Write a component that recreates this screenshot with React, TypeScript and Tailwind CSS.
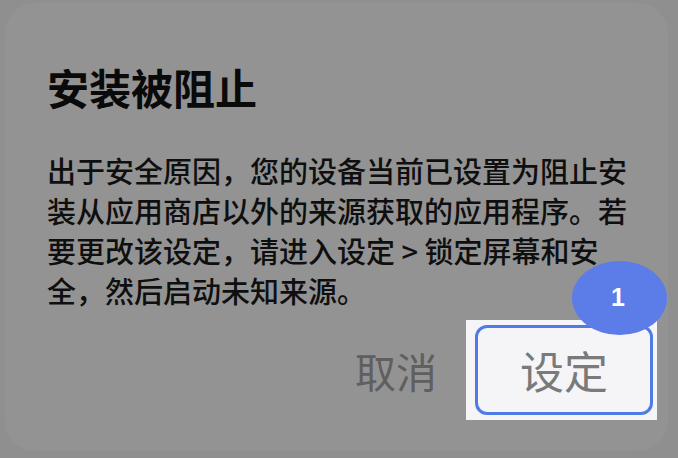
export default function App() {
  return (
    <div
      className="w-[678px] h-[458px] overflow-hidden bg-[#8f8f8f] pt-[3px] pl-[5px]"
      style={{ fontFamily: '"Noto Sans CJK SC", "Noto Sans", sans-serif' }}
    >
      <div className="w-[663px] h-[448px] rounded-[30px] bg-[#939393] pl-[42px] pt-[60px] pr-[11px]">
        <h1 className="text-[42px] leading-[48px] font-bold text-[#0a0a0a]">安装被阻止</h1>
        <p className="mt-[39px] w-[584px] text-[29px] leading-[40px] font-medium text-[#0f0f0f]">
          出于安全原因，您的设备当前已设置为阻止安装从应用商店以外的来源获取的应用程序。若要更改该设定，请进入设定 &gt; 锁定屏幕和安全，然后启动未知来源。
        </p>
        <div className="mt-[10px] flex items-center justify-end">
          <button className="text-[41px] leading-[48px] text-[#5f5f5f] mr-[29px]">取消</button>
          <div className="relative bg-[#f5f5f8] pl-[9px] pr-[4px] py-[5px]">
            <div className="flex h-[90px] w-[178px] items-center justify-center rounded-[12px] border-[3px] border-[#4f7be6] text-[44px] leading-none text-[#7a7a7a]">
              设定
            </div>
            <div
              className="absolute left-[106px] -top-[59px] flex h-[74px] w-[95px] items-center justify-center rounded-[50%] bg-[#5c7ce8] pr-[3px] text-[25px] font-bold text-white"
              style={{ fontFamily: '"Liberation Sans", Arial, sans-serif' }}
            >
              1
            </div>
          </div>
        </div>
      </div>
    </div>
  )
}
